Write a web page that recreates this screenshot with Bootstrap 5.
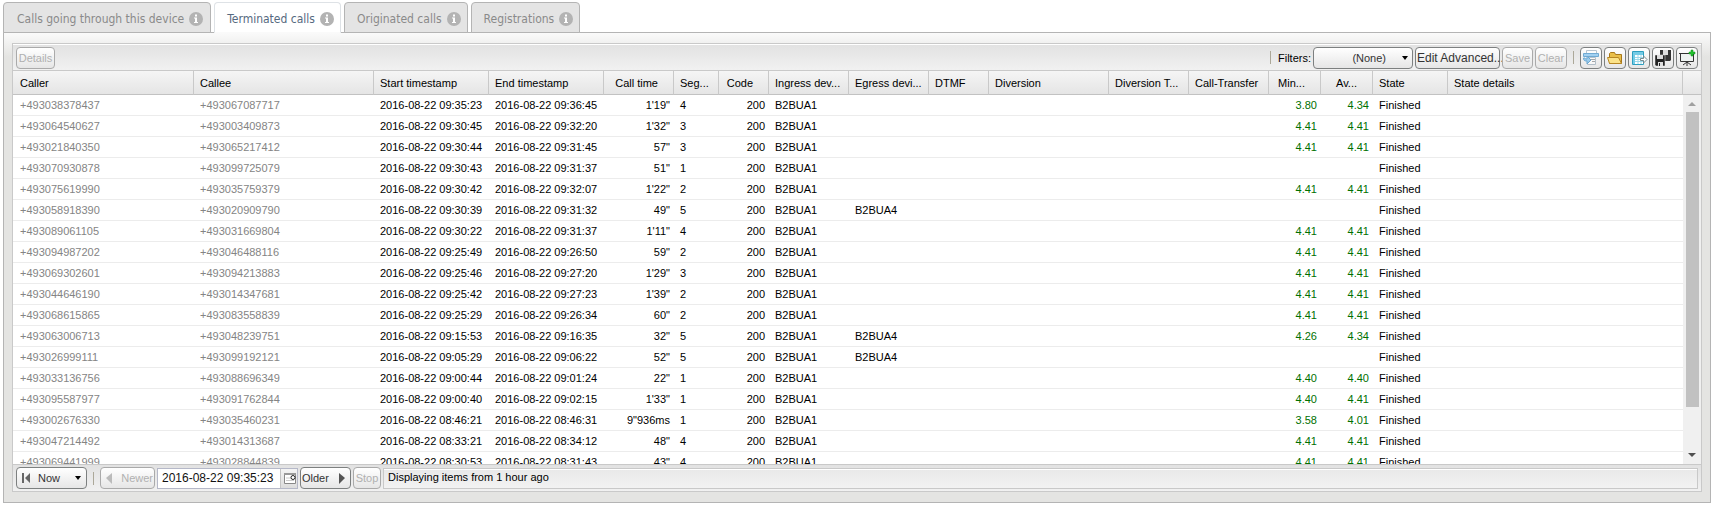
<!DOCTYPE html>
<html lang="en">
<head>
<meta charset="utf-8">
<meta name="viewport" content="width=device-width, initial-scale=1">
<title>Calls</title>
<link rel="stylesheet" href="https://cdn.jsdelivr.net/npm/bootstrap@5.3.0/dist/css/bootstrap.min.css">
<style>
body { font: 11px/14px "Liberation Sans", Arial, sans-serif; color: #000; background: #fff; }
.call-tabs { gap: 3px; border: 0; padding: 2px 3px 0; position: relative; z-index: 1; margin-bottom: -1px; }
.call-tabs .nav-link { display: flex; align-items: center; gap: 5px; height: 31px; margin: 0; padding: 2px 6px 0 12px; border: 1px solid #b4b4b4; border-radius: 4px 4px 0 0; background: #e4e4e4; color: #8a8a8a; font: 12px/16px "DejaVu Sans Condensed", "DejaVu Sans", sans-serif; }
.call-tabs .nav-link.active { background: #fff; border-bottom-color: #fafafa; color: #566980; }
.call-tabs li:first-child .nav-link { padding-left: 13px; padding-right: 7px; }
.panel { margin: 0 3px 3px; border: 1px solid #b4b4b4; padding: 10px 8px; background: linear-gradient(#fafafa, #e4e4e2 24px); min-height: 0; }
.frame { border: 1px solid #c9c9c9; min-height: 0; background: #fff; }
.bar { height: 26px; padding: 1px 3px; gap: 2px; background: linear-gradient(#e2e2e2, #f1f1f1); border-top: 1px solid #fff; }
.bar-foot { height: 27px; border-top-color: #c9c9c9; }
.bar .btn { --bs-btn-font-size: 11px; --bs-btn-line-height: 14px; --bs-btn-padding-x: 1px; --bs-btn-padding-y: 2px; --bs-btn-border-radius: 4px; --bs-btn-color: #333; --bs-btn-border-color: #7d8080; --bs-btn-disabled-color: #b0b0b0; --bs-btn-disabled-border-color: #aaa; --bs-btn-disabled-opacity: 1; height: 22px; background: linear-gradient(#fff, #e6e6e6); white-space: nowrap; }
.bar .w-edit { --bs-btn-font-size: 12px; }
.bar .tool { width: 22px; padding: 0; }
.bar .faint svg { opacity: .6; }
.rule { width: 1px; height: 13px; background: #aca899; margin: 0 5px; }
.w-details { width: 39px; } .w-filter { width: 100px; } .w-edit { width: 85px; } .w-save { width: 31px; } .w-clear { width: 32px; }
.w-now { width: 71px; } .w-newer { width: 55px; } .w-older { width: 51px; } .w-stop { width: 28px; }
.grid-area { min-height: 0; overflow: hidden; border-top: 1px solid #c9c9c9; }
.calls { table-layout: fixed; width: 100%; border-collapse: separate; border-spacing: 0; }
.calls th, .calls td { padding: 0 0 0 6px; white-space: nowrap; overflow: hidden; text-align: left; }
.calls th:first-child, .calls td:first-child { padding-left: 7px; }
.calls th { height: 24px; font-weight: 400; background: linear-gradient(#f5f5f5, #e5e5e5); border-bottom: 1px solid #c2c2c2; border-right: 1px solid #c9c9c9; }
.calls th:last-child { border-right: 0; }
.calls th.num { text-align: right; padding-right: 15px; }
.calls td { height: 21px; border-bottom: 1px solid #ececec; }
.calls td.num { text-align: right; padding-right: 4px; }
.calls td.phone { color: #848484; }
.calls td.mos { color: #007000; }
.calls td:last-child { border: 0; background: #f0f0f0; }
.scroller { top: 24px; right: 0; bottom: 0; width: 18px; background: #f0f0f0; }
.thumb { width: 13px; flex: 0 0 295px; background: #c1c1c1; }
.date { height: 21px; border: 1px solid #b5b8c8; background: #fff; width: 141px; }
.date input { border: 0; padding: 0 0 0 4px; min-width: 0; width: 122px; font-size: 12px; line-height: 14px; background: transparent; color: #111; outline: 0; }
.date button { width: 17px; border: 0; border-left: 1px solid #c4c4c4; padding: 0; background: linear-gradient(#f4f4f4, #dcdcdc); }
.status { height: 21px; border: 1px solid #c9c9c9; box-shadow: inset 0 1px #fff; background: linear-gradient(#e9e9e9, #f2f2f2); padding: 1px 4px; }
</style>
</head>
<body class="d-flex flex-column vh-100 overflow-hidden">
<svg class="d-none" xmlns="http://www.w3.org/2000/svg">
  <symbol id="info" viewBox="0 0 14 14"><circle cx="7" cy="7" r="7" fill="#b3b3b3"/><path d="M6 2.500h2v2H6zM5 5.500h3v4.500h1v1H5v-1h1V6.500H5z" fill="#fff"/></symbol>
</svg>
<nav>
  <ul class="nav nav-tabs call-tabs">
    <li class="nav-item"><a class="nav-link" href="#">Calls going through this device<svg width="14" height="14"><use href="#info"/></svg></a></li>
    <li class="nav-item"><a class="nav-link active" aria-current="page" href="#">Terminated calls<svg width="14" height="14"><use href="#info"/></svg></a></li>
    <li class="nav-item"><a class="nav-link" href="#">Originated calls<svg width="14" height="14"><use href="#info"/></svg></a></li>
    <li class="nav-item"><a class="nav-link" href="#">Registrations<svg width="14" height="14"><use href="#info"/></svg></a></li>
  </ul>
</nav>
<main class="panel d-flex flex-column flex-grow-1">
  <div class="frame d-flex flex-column flex-grow-1">
    <div class="bar d-flex align-items-center flex-shrink-0">
      <button class="btn w-details me-auto" disabled>Details</button>
      <span class="rule"></span>
      <span id="filters-label">Filters:</span>
      <button class="btn w-filter d-flex align-items-center justify-content-end gap-3 pe-1" aria-labelledby="filters-label"><span>(None)</span><svg width="6" height="4"><path d="M0 0h6L3 4z" fill="#000"/></svg></button>
      <button class="btn w-edit">Edit Advanced...</button>
      <button class="btn w-save" disabled>Save</button>
      <button class="btn w-clear" disabled>Clear</button>
      <span class="rule mx-1"></span>
      <button class="btn tool faint" aria-label="Print"><svg width="18" height="18" viewBox="0 0 18 18"><path d="M4.500 5V1.500h10V5M5.500 8.500h8v7h-8z" fill="#fff" stroke="#8da2b4"/><path d="M1.500 4.500h15v3h-15z" fill="#6bb8ee" stroke="#1879bd"/><path d="M9 10.500h4M10 12.500h3" stroke="#777"/><path d="M1.500 9c0 2.500 1 3 3.500 3v3l4-4-4-4v3c-1.500 0-2-.5-2-1z" fill="#61b4ec" stroke="#1879bd"/></svg></button>
      <button class="btn tool" aria-label="Open"><svg width="18" height="18" viewBox="0 0 18 18"><path d="M3.500 14.500v-10l1-1h4l1 2h6v9z" fill="#e9bf4a" stroke="#a8781b"/><path d="M3.500 14.500L1.500 8.500h11l3 6z" fill="#fbe389" stroke="#b78724"/></svg></button>
      <button class="btn tool" aria-label="Export"><svg width="18" height="18" viewBox="0 0 18 18"><path d="M2.500 2.500h11v13h-11z" fill="#fff" stroke="#2d9fc0"/><path d="M3 3h10v3H3zM3 6h2v9H3z" fill="#74cbe6"/><path d="M5 8.500h8M5 10.500h8M5 12.500h8M8 6v9M11 6v9" stroke="#9bd8ea"/><path d="M10.500 9.500h3V7l3.500 3.500-3.500 3.500v-2.500h-3z" fill="#fff" stroke="#788b91"/></svg></button>
      <button class="btn tool" aria-label="Save all"><svg width="18" height="18" viewBox="0 0 18 18"><path d="M6 1h11v10l-1 1H6z" fill="#333"/><path d="M9 1h5v5H9z" fill="#ddd"/><path d="M1 6h10v11H2l-1-1z" fill="#222" stroke="#eee" stroke-width=".5"/><path d="M3 6h6v4H3zM4 13h5v4H4z" fill="#ddd"/><path d="M5 14h1v3H5z" fill="#222"/></svg></button>
      <button class="btn tool" aria-label="Add view"><svg width="18" height="18" viewBox="0 0 18 18"><path d="M2.500 4.500h13v8h-13z" fill="#eef3f1"/><path d="M1 4.500h15M2.500 4v8.500h13V5M9 12v5M9 13l-4 3M9 13l4 3" fill="none" stroke="#333"/><path d="M13 1h2v2h2v2h-2v2h-2V5h-2V3h2z" fill="#22c32e" stroke="#178a20" stroke-width=".5"/></svg></button>
    </div>
    <div class="grid-area position-relative flex-grow-1">
      <table class="calls">
        <colgroup id="widths"></colgroup>
        <thead><tr id="heads"></tr></thead>
        <tbody id="rows"></tbody>
      </table>
      <div class="scroller position-absolute d-flex flex-column align-items-center">
        <svg class="flex-shrink-0" width="8" height="17"><path d="M0 11h8L4 7z" fill="#a0a0a0"/></svg>
        <div class="thumb"></div>
        <span class="flex-grow-1"></span>
        <svg class="flex-shrink-0" width="8" height="17"><path d="M0 6h8l-4 4z" fill="#505050"/></svg>
      </div>
    </div>
    <div class="bar bar-foot d-flex align-items-center flex-shrink-0">
      <button class="btn w-now d-flex align-items-center gap-1"><svg class="ms-1" width="12" height="12"><path d="M0 1h2v10H0zM8 1v10L3 6z" fill="#666"/></svg>Now<svg class="ms-auto me-1" width="6" height="4"><path d="M0 0h6L3 4z" fill="#000"/></svg></button>
      <span class="rule mx-1"></span>
      <button class="btn w-newer d-flex align-items-center justify-content-between" disabled><svg class="ms-1" width="7" height="11"><path d="M6 0v11L0 5z" fill="#bbb"/></svg>Newer</button>
      <div class="date d-flex">
        <input type="text" value="2016-08-22 09:35:23" aria-label="Start time">
        <button aria-label="Pick a date"><svg class="d-block mx-auto" width="13" height="13"><path d="M1.500 1.500h11v10h-11z" fill="#fff" stroke="#888"/><path d="M1 1h12v2H1z" fill="#999"/><path d="M3 6h5M3 8.500h8" stroke="#ccc"/><circle cx="10" cy="5.500" r="2" fill="#fff" stroke="#222"/></svg></button>
      </div>
      <button class="btn w-older d-flex align-items-center justify-content-between">Older<svg class="me-1" width="7" height="11"><path d="M1 0v11l6-6z" fill="#555"/></svg></button>
      <button class="btn w-stop" disabled>Stop</button>
      <div class="status flex-grow-1">Displaying items from 1 hour ago</div>
    </div>
  </div>
</main>
<script>
const columns = [["Caller",181,"phone"],["Callee",180,"phone"],["Start timestamp",115],["End timestamp",115],["Call time",70,"num"],["Seg...",45],["Code",50,"num"],["Ingress dev...",80],["Egress devi...",80],["DTMF",60],["Diversion",120],["Diversion T...",80],["Call-Transfer",80],["Min...",52,"num mos"],["Av...",52,"num mos"],["State",75],["State details",0],["",18]];
// caller, callee, start, end, duration, segments, egress device, minimum and average MOS
const calls = `038378437 067087717 09:35:23 09:36:45 1'19" 4 - 3.80 4.34
064540627 003409873 09:30:45 09:32:20 1'32" 3 - 4.41 4.41
021840350 065217412 09:30:44 09:31:45 57" 3 - 4.41 4.41
070930878 099725079 09:30:43 09:31:37 51" 1 - - -
075619990 035759379 09:30:42 09:32:07 1'22" 2 - 4.41 4.41
058918390 020909790 09:30:39 09:31:32 49" 5 B2BUA4 - -
089061105 031669804 09:30:22 09:31:37 1'11" 4 - 4.41 4.41
094987202 046488116 09:25:49 09:26:50 59" 2 - 4.41 4.41
069302601 094213883 09:25:46 09:27:20 1'29" 3 - 4.41 4.41
044646190 014347681 09:25:42 09:27:23 1'39" 2 - 4.41 4.41
068615865 083558839 09:25:29 09:26:34 60" 2 - 4.41 4.41
063006713 048239751 09:15:53 09:16:35 32" 5 B2BUA4 4.26 4.34
026999111 099192121 09:05:29 09:06:22 52" 5 B2BUA4 - -
033136756 088696349 09:00:44 09:01:24 22" 1 - 4.40 4.40
095587977 091762844 09:00:40 09:02:15 1'33" 1 - 4.40 4.41
002676330 035460231 08:46:21 08:46:31 9"936ms 1 - 3.58 4.01
047214492 014313687 08:33:21 08:34:12 48" 4 - 4.41 4.41
069441999 028844839 08:30:53 08:31:43 43" 4 - 4.41 4.41`;
for (const [name, width, kind = ""] of columns) {
  const col = document.createElement("col");
  if (width) col.style.width = width + "px";
  widths.append(col);
  const th = document.createElement("th");
  th.scope = "col"; th.className = kind; th.textContent = name;
  heads.append(th);
}
for (const line of calls.split("\n")) {
  const [a, b, s, e, t, seg, out, min, avg] = line.split(" ").map(v => v === "-" ? "" : v);
  const day = "2016-08-22 ";
  const tr = document.getElementById("rows").insertRow();
  ["+493" + a, "+493" + b, day + s, day + e, t, seg, "200", "B2BUA1", out, "", "", "", "", min, avg, "Finished", "", ""].forEach((v, i) => {
    const td = tr.insertCell(); td.textContent = v; td.className = columns[i][2] || "";
  });
}
</script>
<script src="https://cdn.jsdelivr.net/npm/bootstrap@5.3.0/dist/js/bootstrap.bundle.min.js"></script>
</body>
</html>
